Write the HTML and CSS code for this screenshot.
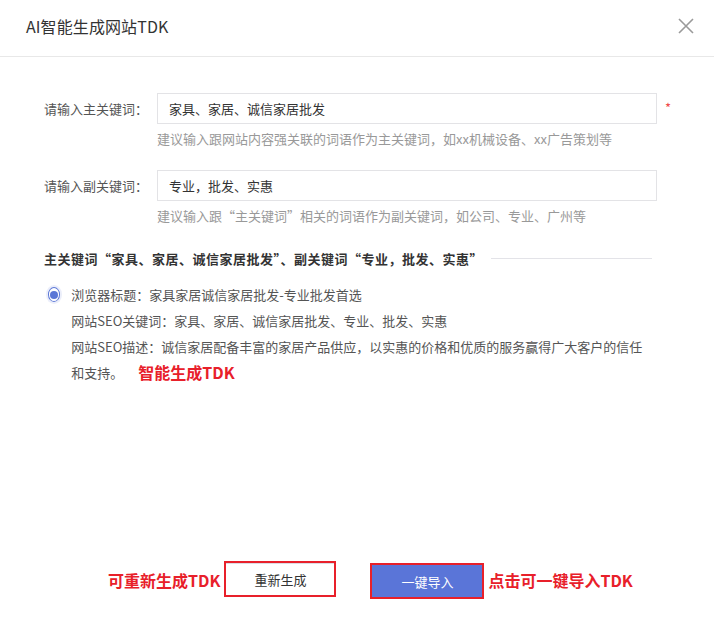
FILE: index.html
```html
<!DOCTYPE html>
<html lang="zh-CN">
<head>
    <meta charset="UTF-8">
    <meta name="viewport" content="width=device-width, initial-scale=1.0">
    <title>AI智能生成网站TDK</title>
    <link rel="stylesheet" href="styles.css">
</head>
<body>
    <div class="dialog">
        <div class="dialog-header">
            <h1>AI智能生成网站TDK</h1>
            <button class="close-btn" aria-label="关闭">
                <svg width="16" height="16" viewBox="0 0 16 16">
                    <path d="M1 1 L15 15 M15 1 L1 15" stroke="#9a9a9a" stroke-width="1.6" fill="none"/>
                </svg>
            </button>
        </div>

        <div class="dialog-body">
            <div class="form-row">
                <label for="mainKey">请输入主关键词：</label>
                <div class="field">
                    <input type="text" id="mainKey" value="家具、家居、诚信家居批发">
                    <span class="required">*</span>
                </div>
            </div>
            <p class="hint">建议输入跟网站内容强关联的词语作为主关键词，如xx机械设备、xx广告策划等</p>

            <div class="form-row second">
                <label for="subKey">请输入副关键词：</label>
                <div class="field">
                    <input type="text" id="subKey" value="专业，批发、实惠">
                </div>
            </div>
            <p class="hint">建议输入跟“主关键词”相关的词语作为副关键词，如公司、专业、广州等</p>

            <div class="section-title">
                <span>主关键词“家具、家居、诚信家居批发”、副关键词“专业，批发、实惠”</span>
                <i class="section-line"></i>
            </div>

            <div class="result">
                <span class="radio"></span>
                <div class="result-text">
                    <p>浏览器标题：家具家居诚信家居批发-专业批发首选</p>
                    <p>网站SEO关键词：家具、家居、诚信家居批发、专业、批发、实惠</p>
                    <p>网站SEO描述：诚信家居配备丰富的家居产品供应，以实惠的价格和优质的服务赢得广大客户的信任和支持。<span class="note inline">智能生成TDK</span></p>
                </div>
            </div>
        </div>

        <div class="dialog-footer">
            <span class="note">可重新生成TDK</span>
            <button class="btn btn-default">重新生成</button>
            <button class="btn btn-primary">一键导入</button>
            <span class="note">点击可一键导入TDK</span>
        </div>
    </div>
</body>
</html>
```

FILE: styles.css
```css
* {
    box-sizing: border-box;
    margin: 0;
    padding: 0;
}

body {
    font-family: "Microsoft YaHei", "Noto Sans CJK SC", "Noto Sans", sans-serif;
    background-color: #fff;
    color: #555;
    font-size: 13px;
    width: 714px;
    height: 622px;
    overflow: hidden;
}

.dialog {
    display: flex;
    flex-direction: column;
    height: 622px;
}

.dialog-header {
    height: 57px;
    border-bottom: 1px solid #e8e8e8;
    display: flex;
    align-items: center;
    justify-content: space-between;
    padding: 0 20px 4px 26px;
}

.dialog-header h1 {
    font-size: 16px;
    font-weight: normal;
    color: #333;
    line-height: 20px;
    letter-spacing: 0.1px;
}

.close-btn {
    border: none;
    background: none;
    width: 16px;
    height: 16px;
    cursor: pointer;
}

.close-btn svg {
    display: block;
}

.dialog-body {
    padding: 36px 62px 0 44px;
    flex: 1;
}

.form-row {
    display: flex;
    align-items: center;
}

.form-row.second {
    margin-top: 22px;
}

.form-row label {
    width: 113px;
    flex: none;
    color: #555;
    line-height: 31px;
}

.field {
    position: relative;
    width: 500px;
    flex: none;
}

.field input {
    width: 100%;
    height: 31px;
    border: 1px solid #e3e3e6;
    padding: 0 11px;
    font-family: inherit;
    font-size: 13px;
    color: #333;
    outline: none;
}

.required {
    position: absolute;
    left: 508px;
    top: 7px;
    color: #f04a4a;
    font-size: 13px;
    line-height: 16px;
}

.hint {
    margin: 6px 0 0 113px;
    color: #999;
    line-height: 18px;
}

.section-title {
    margin-top: 25px;
    display: flex;
    align-items: center;
    line-height: 18px;
    color: #333;
    font-weight: bold;
}

.section-title span {
    letter-spacing: 0.5px;
}

.section-line {
    flex: 1;
    height: 1px;
    background-color: #e3e3e8;
    margin: 0 0 1px 8px;
}

.result {
    margin-top: 14px;
    display: flex;
    align-items: flex-start;
}

.radio {
    width: 15px;
    height: 15px;
    border: 1px solid #5b77d6;
    border-radius: 50%;
    margin: 5px 0 0 4px;
    display: flex;
    align-items: center;
    justify-content: center;
    box-shadow: 0 0 0 2px rgba(91, 119, 214, 0.12);
}

.radio::after {
    content: "";
    width: 8px;
    height: 8px;
    border-radius: 50%;
    background-color: #5b77d6;
}

.result-text {
    margin-left: 11px;
    line-height: 26px;
    color: #555;
}

.note {
    color: #e8202a;
    font-size: 16px;
    font-weight: bold;
    line-height: 20px;
}

.note.inline {
    display: inline-block;
    margin-left: 15px;
    vertical-align: top;
    line-height: 24px;
}

.dialog-footer {
    display: flex;
    align-items: center;
    padding: 0 0 0 108px;
    height: 84px;
}

.btn {
    font-family: inherit;
    font-size: 13px;
    cursor: pointer;
    border: 2px solid #e8202a;
}

.btn-default {
    width: 112px;
    height: 36px;
    margin-left: 4px;
    margin-bottom: 2px;
    background-color: #fff;
    color: #333;
    box-shadow: inset 0 1px 0 #dcdce4;
}

.btn-primary {
    width: 114px;
    height: 36px;
    margin-left: 34px;
    margin-top: 2px;
    background-color: #5a75d8;
    color: #fff;
}

.btn-primary + .note {
    margin-left: 4px;
}
```
